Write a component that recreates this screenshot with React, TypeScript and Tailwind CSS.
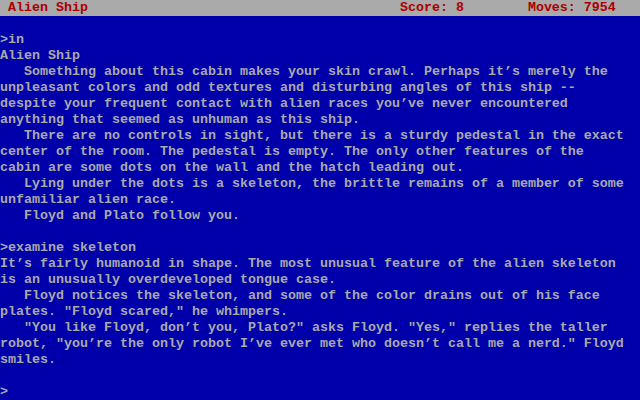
const status = ' Alien Ship'.padEnd(50) + 'Score: 8'.padEnd(16) + 'Moves: 7954'

const lines = [
  '',
  '>in',
  'Alien Ship',
  '   Something about this cabin makes your skin crawl. Perhaps it’s merely the',
  'unpleasant colors and odd textures and disturbing angles of this ship --',
  'despite your frequent contact with alien races you’ve never encountered',
  'anything that seemed as unhuman as this ship.',
  '   There are no controls in sight, but there is a sturdy pedestal in the exact',
  'center of the room. The pedestal is empty. The only other features of the',
  'cabin are some dots on the wall and the hatch leading out.',
  '   Lying under the dots is a skeleton, the brittle remains of a member of some',
  'unfamiliar alien race.',
  '   Floyd and Plato follow you.',
  '',
  '>examine skeleton',
  'It’s fairly humanoid in shape. The most unusual feature of the alien skeleton',
  'is an unusually overdeveloped tongue case.',
  '   Floyd notices the skeleton, and some of the color drains out of his face',
  'plates. "Floyd scared," he whimpers.',
  '   "You like Floyd, don’t you, Plato?" asks Floyd. "Yes," replies the taller',
  'robot, "you’re the only robot I’ve ever met who doesn’t call me a nerd." Floyd',
  'smiles.',
  '',
  '>',
]

export default function App() {
  return (
    <div className="w-[640px] h-[400px] overflow-hidden bg-[#0000aa] text-[#aaaaaa] font-['Liberation_Mono',monospace] text-[13.333px] leading-[16px] font-bold">
      <div className="h-4 bg-[#aaaaaa] text-[#aa0000] whitespace-pre">{status}</div>
      {lines.map((line, i) => (
        <div key={i} className="h-4 whitespace-pre">{line}</div>
      ))}
    </div>
  )
}
